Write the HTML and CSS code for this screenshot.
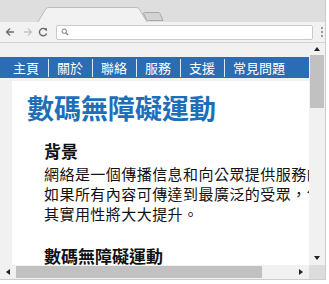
FILE: index.html
```html
<!DOCTYPE html>
<html lang="zh-Hant">
<head>
<meta charset="utf-8">
<title>數碼無障礙運動</title>
<link rel="stylesheet" href="styles.css">
</head>
<body>
<div class="window">
  <div class="tabbar">
    <svg class="tabs" width="325" height="22" viewBox="0 0 325 22">
      <path d="M38 22 L46 8.5 Q47 7.5 49 7.5 L136 7.5 Q138 7.5 139 8.5 L147 22" fill="#f2f2f2" stroke="#bcbcbc" stroke-width="1"/>
      <path d="M144.5 12.5 L158 12.5 Q159.5 12.5 160 13.5 L163 20.5 L148.5 20.5 Q147 20.5 146.5 19.5 L143.5 13.8 Q143.5 12.5 144.5 12.5 Z" fill="#d3d3d3" stroke="#a9a9a9" stroke-width="1"/>
    </svg>
  </div>
  <div class="toolbar">
    <svg class="nav-icon" width="12" height="12" viewBox="0 0 12 12"><path d="M10 6 H2.5 M6 2.5 L2.5 6 L6 9.5" fill="none" stroke="#6b6b6b" stroke-width="1.3"/></svg>
    <svg class="nav-icon" width="12" height="12" viewBox="0 0 12 12"><path d="M2 6 H9.5 M6 2.5 L9.5 6 L6 9.5" fill="none" stroke="#c4c4c4" stroke-width="1.3"/></svg>
    <svg class="nav-icon" width="12" height="12" viewBox="0 0 12 12"><path d="M9.3 4.2 A3.7 3.7 0 1 0 9.6 7.4" fill="none" stroke="#6b6b6b" stroke-width="1.4"/><path d="M7 2.3 L10 2.3 L10 5.3 Z" fill="#6b6b6b"/></svg>
    <div class="address">
      <svg width="8" height="8" viewBox="0 0 8 8"><circle cx="3.2" cy="3.2" r="2.2" fill="none" stroke="#7a7a7a" stroke-width="1"/><path d="M4.8 4.8 L7 7" stroke="#7a7a7a" stroke-width="1.2"/></svg>
    </div>
    <div class="menu"><span></span><span></span><span></span></div>
  </div>
  <div class="page">
    <div class="viewport">
      <ul class="mainnav">
        <li>主頁</li>
        <li>關於</li>
        <li>聯絡</li>
        <li>服務</li>
        <li>支援</li>
        <li class="last">常見問題</li>
      </ul>
      <div class="content">
        <h1>數碼無障礙運動</h1>
        <h2>背景</h2>
        <p>網絡是一個傳播信息和向公眾提供服務的重要途徑。<br>如果所有內容可傳達到最廣泛的受眾，包括殘疾人士，<br>其實用性將大大提升。</p>
        <h2>數碼無障礙運動</h2>
      </div>
    </div>
    <div class="vscroll">
      <div class="arrow-box"><span class="tri up"></span></div>
      <div class="vtrack"><div class="vthumb"></div></div>
      <div class="arrow-box bottom"><span class="tri down"></span></div>
    </div>
  </div>
  <div class="hscroll">
    <div class="harrow"><span class="tri left"></span></div>
    <div class="htrack"><div class="hthumb"></div></div>
    <div class="harrow"><span class="tri right"></span></div>
    <div class="corner"></div>
  </div>
</div>
</body>
</html>
```
FILE: styles.css
```css
html, body {
  margin: 0;
  padding: 0;
}
body {
  width: 329px;
  height: 284px;
  background: #ffffff;
  overflow: hidden;
  font-family: "Noto Sans CJK TC", "Noto Sans", sans-serif;
}
.window {
  width: 326px;
  height: 280px;
  box-sizing: border-box;
  border-right: 1px solid #cdcdcd;
  border-bottom: 1px solid #cdcdcd;
  display: flex;
  flex-direction: column;
  background: #f1f1f1;
}
.tabbar {
  height: 22px;
  flex: none;
  background: #dedede;
  overflow: hidden;
}
.tabs {
  display: block;
}
.toolbar {
  height: 21px;
  flex: none;
  box-sizing: border-box;
  background: #f2f2f2;
  border-bottom: 1px solid #d4d4d4;
  display: flex;
  align-items: center;
  padding-left: 4px;
}
.nav-icon {
  display: block;
  flex: none;
  margin-right: 3px;
}
.toolbar .nav-icon:nth-child(2) {
  margin-left: 3px;
}
.address {
  flex: none;
  width: 257px;
  height: 15px;
  box-sizing: border-box;
  margin-left: 4px;
  background: #ffffff;
  border: 1px solid #cacaca;
  border-radius: 2px;
  display: flex;
  align-items: center;
  padding-left: 4px;
}
.address svg {
  display: block;
}
.menu {
  margin-left: 8px;
  display: flex;
  flex-direction: column;
  gap: 2px;
}
.menu span {
  width: 2px;
  height: 2px;
  background: #9a9a9a;
}
.page {
  flex: 1;
  display: flex;
  min-height: 0;
}
.viewport {
  flex: 1;
  overflow: hidden;
  background: #f1f1f1;
  padding-top: 14px;
}
.mainnav {
  list-style: none;
  margin: 0;
  padding: 0 0 0 4px;
  height: 21px;
  background: #2b6cb3;
  display: flex;
  align-items: center;
}
.mainnav li {
  color: #ffffff;
  font-size: 13px;
  line-height: 21px;
  padding: 0 9px;
  position: relative;
}
.mainnav li::after {
  content: "";
  position: absolute;
  right: -1px;
  top: 2px;
  bottom: 1px;
  width: 1px;
  background: rgba(255, 255, 255, 0.85);
}
.mainnav li.last::after {
  display: none;
}
.content {
  margin: 3px 0 0 12px;
  background: #ffffff;
  padding: 11px 0 40px 15px;
  white-space: nowrap;
  color: #111111;
}
.content h1 {
  margin: 0;
  font-size: 27px;
  line-height: 32px;
  font-weight: bold;
  color: #1d6fba;
}
.content h2 {
  margin: 16px 0 0 17px;
  font-size: 17px;
  line-height: 22px;
  font-weight: bold;
}
.content p {
  margin: 2px 0 21px 17px;
  font-size: 15px;
  line-height: 20px;
  letter-spacing: 0.45px;
}
.content p + h2 {
  margin-top: 0;
}
.vscroll {
  width: 16px;
  flex: none;
  background: #f1f1f1;
  display: flex;
  flex-direction: column;
}
.arrow-box {
  height: 12px;
  flex: none;
  display: flex;
  align-items: center;
  justify-content: center;
}
.arrow-box.bottom {
  height: 14px;
}
.vtrack {
  flex: 1;
}
.vthumb {
  margin: 0 1px;
  height: 53px;
  background: #c1c1c1;
}
.hscroll {
  height: 14px;
  flex: none;
  display: flex;
  background: #f1f1f1;
}
.harrow {
  width: 16px;
  flex: none;
  display: flex;
  align-items: center;
  justify-content: center;
}
.htrack {
  flex: 1;
  padding: 1px 0;
}
.hthumb {
  width: 246px;
  height: 100%;
  background: #c1c1c1;
}
.corner {
  width: 16px;
  flex: none;
  background: #dcdcdc;
}
.tri {
  width: 0;
  height: 0;
  border-style: solid;
}
.tri.up {
  border-width: 0 3px 4px 3px;
  border-color: transparent transparent #222 transparent;
}
.tri.down {
  border-width: 4px 3px 0 3px;
  border-color: #222 transparent transparent transparent;
}
.tri.left {
  border-width: 3px 4px 3px 0;
  border-color: transparent #222 transparent transparent;
}
.tri.right {
  border-width: 3px 0 3px 4px;
  border-color: transparent transparent transparent #222;
}
```
